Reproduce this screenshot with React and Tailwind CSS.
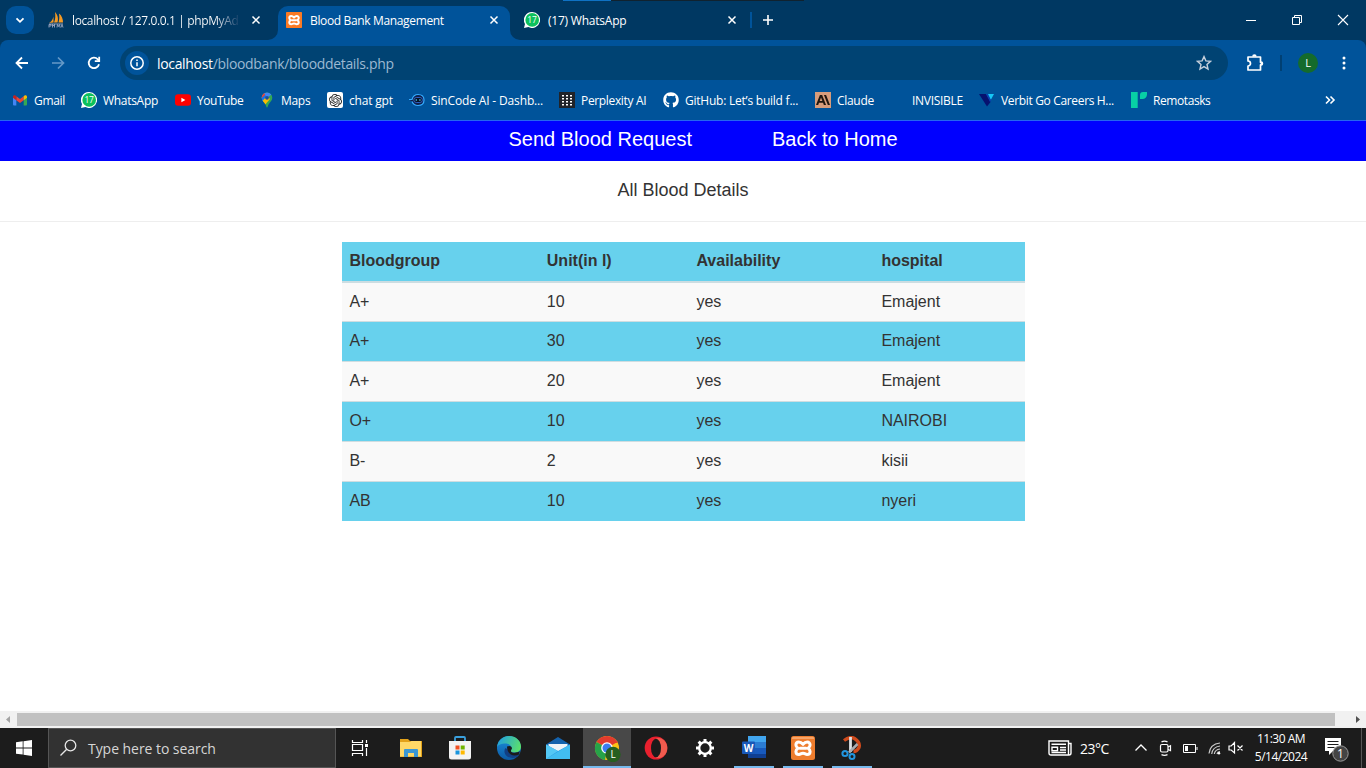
import React from "react";
import { SiAnthropic, SiOpenai } from "react-icons/si";
import { FaGithub } from "react-icons/fa";

const CloseIcon = () => (
  <svg className="size-4 shrink-0" viewBox="0 0 16 16" fill="none" stroke="#fff" strokeWidth="1.5">
    <path d="M4.5 4.5l7 7M11.5 4.5l-7 7" />
  </svg>
);

const Xampp = ({ big }) => (
  <svg className={big ? "size-6 shrink-0" : "size-4 shrink-0"} viewBox="0 0 24 24">
    <rect width="24" height="24" rx={big ? 2.5 : 1} fill={big ? "#ee7d2e" : "#fb7a24"} />
    {big && <path d="M1 2q0-1 1-1h20q1 0 1 1v1H1z" fill="#f6a468" />}
    <path
      d="M12 8.300C10.500 6.500 9.300 6 7.800 6 5.900 6 4.900 7.400 4.900 9c0 1.500.9 2.400 2.100 3.200-1.200.8-2.100 1.700-2.100 3.200 0 1.700 1.200 3 3.100 3 1.500 0 1.900-1.200 4-1.200s2.500 1.200 4 1.200c1.900 0 3.100-1.300 3.100-3 0-1.500-.9-2.400-2.100-3.200 1.200-.8 2.100-1.700 2.100-3.200 0-1.600-1-3-2.900-3-1.500 0-2.700.5-4.200 2.300z"
      fill="none"
      stroke="#fff"
      strokeWidth="3"
      strokeLinejoin="round"
    />
    <path d="M9 12.200h6" stroke="#fff" strokeWidth="3" strokeLinecap="round" />
  </svg>
);

const WhatsApp = () => (
  <svg className="size-4 shrink-0" viewBox="0 0 16 16">
    <path d="M8 0a8 8 0 1 1-3.600 15.100L0 16l1-4A8 8 0 0 1 8 0z" fill="#fff" />
    <circle cx="8.200" cy="7.900" r="6.800" fill="#0dc15c" />
    <text x="8.100" y="10.900" fontSize="8.500" fill="#fff" textAnchor="middle" fontFamily="Open Sans, sans-serif">17</text>
  </svg>
);

const PhpMyAdmin = () => (
  <svg className="size-4 shrink-0" viewBox="0 0 16 16">
    <path d="M5.500 1.500C6 5 4.500 9 1 11l4.500-.5zM7 0c3 3 3.500 7 2.500 10.500H6C7.500 7 7.500 4 7 0zM11 1.500c3 2 4 6 4 9h-4.500C11.500 7 11.500 5 11 1.500z" fill="#f59a23" />
    <path d="M1 12h14M1 15.500V12.500h2v1.500H1M4.500 12v3.500m0-2h2M6.500 12v3.500M9 15.500l.5-3 1 2 1-2 .5 3M13 15.500l1-3 1 3" stroke="#9ca6bf" strokeWidth=".9" fill="none" />
  </svg>
);

const Gmail = () => (
  <svg className="h-4 w-4 shrink-0" viewBox="0 0 16 16">
    <path d="M1 4.500l3.300 2.400V13.500H2A1 1 0 0 1 1 12.500z" fill="#4285f4" />
    <path d="M15 4.500l-3.300 2.400V13.500H14a1 1 0 0 0 1-1z" fill="#34a853" />
    <path d="M4.300 4.200L8 7l3.700-2.800v4L8 11 4.300 8.200z" fill="#ea4335" />
    <path d="M11.700 4.200l.6-.5c1.200-.9 2.700-.2 2.700 1.200v.8l-3.300 2.500z" fill="#fbbc04" />
    <path d="M4.300 4.200l-.6-.5C2.500 2.800 1 3.500 1 4.900v.8l3.300 2.500z" fill="#c5221f" />
  </svg>
);

const YouTube = () => (
  <svg className="size-4 shrink-0" viewBox="0 0 16 16">
    <rect y="2.300" width="16" height="11.400" rx="3" fill="#f00" />
    <path d="M6.400 5.700v4.600l4-2.300z" fill="#fff" />
  </svg>
);

const Maps = () => (
  <svg className="size-4 shrink-0" viewBox="0 0 16 16">
    <defs>
      <clipPath id="pin"><path d="M8 .5a5.300 5.300 0 0 1 5.300 5.300c0 3-2.300 4.200-3.800 6.700-.7 1.200-.8 3-1.500 3s-.8-1.800-1.500-3C5 10 2.700 8.800 2.700 5.800A5.300 5.300 0 0 1 8 .5z" /></clipPath>
    </defs>
    <g clipPath="url(#pin)">
      <rect width="16" height="16" fill="#34a853" />
      <path d="M0 0h16L8 5.800 3 11H0z" fill="#4285f4" />
      <path d="M2 5l3.500-3L8 5.800 3.500 10z" fill="#1a73e8" />
      <path d="M2.500 10L8 4l3 3-6 7z" fill="#fbbc04" />
      <path d="M0 0h5l1 3-4 3.500z" fill="#ea4335" />
    </g>
    <circle cx="8" cy="5.800" r="1.900" fill="#174ea6" />
  </svg>
);

const ChatGpt = () => (
  <span className="flex size-4 shrink-0 items-center justify-center rounded-[2px] bg-white">
    <SiOpenai size={13} color="#222" />
  </span>
);

const SinCode = () => (
  <svg className="size-4 shrink-0" viewBox="0 0 16 16">
    <path d="M0 7.500h3C4 4 6.500 2.500 9 2.500c4 0 6 2.500 6 5.500s-2 5.500-6 5.500c-2.500 0-5-1.500-6-4" fill="#10204a" stroke="#35aaff" strokeWidth="1.200" />
    <rect x="4.800" y="5.500" width="8.600" height="5" rx="2.500" fill="#061225" stroke="#3970e8" strokeWidth=".8" />
    <circle cx="7.300" cy="8" r=".8" fill="#55d8ff" /><circle cx="10.900" cy="8" r=".8" fill="#55d8ff" />
  </svg>
);

const Perplexity = () => (
  <svg className="size-4 shrink-0" viewBox="0 0 16 16">
    <rect width="16" height="16" fill="#202329" />
    <g fill="#fff">
      {[3, 6, 9, 12].map((y) => [3, 7, 11].map((x) => <rect key={x + "-" + y} x={x} y={y} width="2" height="1.500" />))}
    </g>
  </svg>
);

const Claude = () => (
  <span className="flex size-4 shrink-0 items-center justify-center bg-[#d79c7b]">
    <SiAnthropic size={14} color="#20160f" />
  </span>
);

const Verbit = () => (
  <svg className="size-4 shrink-0" viewBox="0 0 16 16">
    <path d="M0 2h7l4.500 8L8 14.500z" fill="#06116f" />
    <path d="M8 2h7l-3.300 6z" fill="#16c8f5" /><path d="M7 2h2l3 6-1 2z" fill="#0b3fae" />
  </svg>
);

const Remotasks = () => (
  <svg className="size-4 shrink-0" viewBox="0 0 16 16">
    <path d="M0 0h6.700v16H0zM9 7V3a3 3 0 0 1 3-3h4v2.500A4.500 4.500 0 0 1 11.500 7z" fill="#08cfa5" />
  </svg>
);

const bookmarks = [
  { label: "Gmail", icon: <Gmail />, cls: "w-[69px] tracking-[-0.300px]" },
  { label: "WhatsApp", icon: <WhatsApp />, cls: "w-[94px] tracking-[-0.300px]" },
  { label: "YouTube", icon: <YouTube />, cls: "w-[84px] tracking-[-0.450px]" },
  { label: "Maps", icon: <Maps />, cls: "w-[68px] tracking-[-0.300px]" },
  { label: "chat gpt", icon: <ChatGpt />, cls: "w-[82px] tracking-[-0.200px]" },
  { label: "SinCode AI - Dashb...", icon: <SinCode />, cls: "w-[150px] tracking-[-0.150px]" },
  { label: "Perplexity AI", icon: <Perplexity />, cls: "w-[104px] tracking-[-0.340px]" },
  { label: "GitHub: Let’s build f...", icon: <FaGithub size={16} className="shrink-0" />, cls: "w-[152px] tracking-[-0.230px]" },
  { label: "Claude", icon: <Claude />, cls: "w-[75px] tracking-[-0.300px]" },
  { label: "INVISIBLE", icon: <span className="size-4 shrink-0" />, cls: "w-[89px] tracking-[-0.300px]" },
  { label: "Verbit Go Careers H...", icon: <Verbit />, cls: "w-[152px] tracking-[-0.340px]" },
  { label: "Remotasks", icon: <Remotasks />, cls: "w-[100px] tracking-[-0.420px]" },
];

function TabStrip() {
  return (
    <div className="relative flex h-10 bg-[#003862] text-[12px]">
      <div className="absolute left-[563px] top-0 h-px w-12 bg-[#0f72c4]" />
      <div className="absolute left-[611px] top-0 h-px w-[193px] bg-[#10222f]" />
      <div className="ml-1.5 mt-1.5 flex size-7 items-center justify-center rounded-[10px] bg-[#00539a]">
        <svg className="size-4" viewBox="0 0 16 16" fill="none" stroke="#fff" strokeWidth="1.800"><path d="M4.500 6.300L8 9.800l3.500-3.500" /></svg>
      </div>
      <div className="ml-3.5 flex w-[230px] items-center">
        <PhpMyAdmin />
        <span className="ml-2 w-[168px] whitespace-nowrap bg-linear-to-r from-white from-85% to-[#003862] bg-clip-text pt-0.5 tracking-[-0.380px] text-transparent">localhost / 127.0.0.1 | phpMyAd</span>
        <span className="ml-2"><CloseIcon /></span>
      </div>
      <div className="relative mt-1.5 flex h-[34px] w-[232px] items-center rounded-t-[10px] bg-[#00539a] pb-1.5 pl-2">
        <svg className="absolute -left-2.5 bottom-0 size-2.5" viewBox="0 0 10 10"><path d="M10 0v10H0A10 10 0 0 0 10 0z" fill="#00539a" /></svg>
        <svg className="absolute -right-2.5 bottom-0 size-2.5" viewBox="0 0 10 10"><path d="M0 0v10h10A10 10 0 0 1 0 0z" fill="#00539a" /></svg>
        <Xampp />
        <span className="ml-2 w-[176px] whitespace-nowrap pt-0.5 tracking-[-0.350px]">Blood Bank Management</span>
        <CloseIcon />
      </div>
      <div className="ml-3.5 flex items-center">
        <WhatsApp />
        <span className="ml-2 w-[176px] whitespace-nowrap pt-0.5 tracking-[-0.220px]">(17) WhatsApp</span>
        <CloseIcon />
        <span className="ml-2.5 h-4 w-0.5 bg-[#00539a]" />
        <svg className="ml-2 size-4" viewBox="0 0 16 16" fill="none" stroke="#fff" strokeWidth="1.600"><path d="M8 3v10M3 8h10" /></svg>
      </div>
      <div className="ml-auto flex items-center gap-[34px] pr-[17px]">
        <svg className="size-3" viewBox="0 0 12 12" stroke="#fff"><path d="M1 6.500h10" /></svg>
        <svg className="size-3" viewBox="0 0 12 12" fill="none" stroke="#fff"><path d="M1.500 3.500h7v7h-7zM3.500 3.500v-2h7v7h-2" /></svg>
        <svg className="size-3" viewBox="0 0 12 12" stroke="#fff" strokeWidth="1.100"><path d="M1 1l10 10M11 1L1 11" /></svg>
      </div>
    </div>
  );
}

function Toolbar() {
  return (
    <div className="bg-[#003862]">
      <div className="flex h-[46px] items-center rounded-t-lg bg-[#00539a]">
        <svg className="ml-3.5 size-4" viewBox="0 0 16 16" fill="none" stroke="#fff" strokeWidth="1.800"><path d="M14 8H3M8 2.500L2.500 8 8 13.500" /></svg>
        <svg className="ml-5 size-4" viewBox="0 0 16 16" fill="none" stroke="#6599c7" strokeWidth="1.700"><path d="M2 8h11M8 2.500L13.500 8 8 13.500" /></svg>
        <svg className="ml-5 size-4" viewBox="0 0 16 16" fill="none" stroke="#fff" strokeWidth="1.800"><path d="M13 9.200A5.200 5.200 0 1 1 11.800 4.400L13 5.700" /><path d="M13.200 1.800v4.400H8.800" /></svg>
        <div className="ml-[18px] flex h-[34px] w-[1108px] items-center rounded-full bg-[#004373] pl-[5px] pr-4">
          <span className="flex size-6 items-center justify-center rounded-full bg-[#00539a]">
            <svg className="size-4" viewBox="0 0 16 16" fill="none" stroke="#fff" strokeWidth="1.500"><circle cx="8" cy="8" r="6.200" /><path d="M8 7.300v4M8 4.500v1.600" /></svg>
          </span>
          <span className="ml-2 whitespace-nowrap text-[14px] tracking-[-0.330px] text-[#9cb9d2]"><span className="text-white">localhost</span>/bloodbank/blooddetails.php</span>
          <svg className="ml-auto size-4" viewBox="0 0 16 16" fill="none" stroke="#c6d0dc" strokeWidth="1.400"><path d="M8 1.600l1.900 4.300 4.600.4-3.500 3.100 1 4.600L8 11.600 4 14l1-4.600-3.500-3.100 4.600-.4z" /></svg>
        </div>
        <svg className="ml-[18px] size-[18px]" viewBox="0 0 18 18" fill="none" stroke="#fff" strokeWidth="1.700" strokeLinejoin="round"><path d="M2 3h12.500v5.300a1.300 1.300 0 0 1 0 2.600V16H2v-4a2.500 2.500 0 0 0 0-5z" /><path d="M7 2.500a1.400 1.400 0 0 1 2.800 0M15 8.200a1.400 1.400 0 0 1 0 2.800" fill="#fff" /></svg>
        <span className="ml-4 h-4 w-0.5 bg-[#004073]" />
        <span className="ml-4 flex size-5 items-center justify-center rounded-full bg-[#146b2c] pt-px text-[11px]">L</span>
        <svg className="ml-[18px] size-4" viewBox="0 0 16 16" fill="#fff"><circle cx="8" cy="3" r="1.500" /><circle cx="8" cy="8" r="1.500" /><circle cx="8" cy="13" r="1.500" /></svg>
      </div>
    </div>
  );
}

function Bookmarks() {
  return (
    <div className="flex h-[35px] items-center border-b border-[#2565f0] bg-[#00539a] pb-1.5 pl-3 pr-7 text-[12px]">
      {bookmarks.map((b) => (
        <div key={b.label} className={"flex shrink-0 items-center gap-1.5 whitespace-nowrap " + b.cls}>
          {b.icon}
          <span className="pt-px">{b.label}</span>
        </div>
      ))}
      <svg className="ml-auto size-4" viewBox="0 0 16 16" fill="none" stroke="#fff" strokeWidth="1.600"><path d="M4 4.500L7.500 8 4 11.500M8.500 4.500L12 8l-3.500 3.500" /></svg>
    </div>
  );
}

const rows = [
  ["A+", "10", "yes", "Emajent"],
  ["A+", "30", "yes", "Emajent"],
  ["A+", "20", "yes", "Emajent"],
  ["O+", "10", "yes", "NAIROBI"],
  ["B-", "2", "yes", "kisii"],
  ["AB", "10", "yes", "nyeri"],
];

function Page() {
  return (
    <main className="flex h-[607px] flex-col bg-white font-['Liberation_Sans',Arial,sans-serif] text-[#333]">
      <nav className="flex h-10 shrink-0 gap-20 bg-[#0000ff] pl-[508.500px] pt-1 text-[20px] leading-[28px] text-white">
        <a>Send Blood Request</a>
        <a>Back to Home</a>
      </nav>
      <h1 className="h-[61px] shrink-0 border-b border-[#eee] pt-[19px] text-center text-[18px] leading-5">All Blood Details</h1>
      <table className="ml-[342px] mt-5 w-[683px] table-fixed border-separate border-spacing-0 text-left text-[16px] leading-[22px]">
        <colgroup>
          <col className="w-[197px]" />
          <col className="w-[150px]" />
          <col className="w-[185px]" />
          <col className="w-[151px]" />
        </colgroup>
        <thead>
          <tr className="h-[41px] bg-[#67d1ed]">
            {["Bloodgroup", "Unit(in l)", "Availability", "hospital"].map((h) => (
              <th key={h} className="border-b-2 border-[#ccdde2] px-[7.400px] pb-0.5 pt-0 font-bold nth-2:pl-[7.800px]">{h}</th>
            ))}
          </tr>
        </thead>
        <tbody>
          {rows.map((r, i) => (
            <tr key={i} className="h-10 odd:bg-[#f9f9f9] even:bg-[#67d1ed] first:h-[39px] last:h-[39px]">
              {r.map((c, j) => (
                <td key={j} className={"px-[7.400px] pt-0 nth-2:pl-[7.800px] " + (i === 0 ? "border-b border-[#cfdde1] pb-0" : i < 5 ? "border-b border-[#cfdde1] pb-0.5" : "pb-0.5")}>{c}</td>
              ))}
            </tr>
          ))}
        </tbody>
      </table>
      <div className="mt-auto flex h-[17px] shrink-0 items-center bg-[#f1f1f1]">
        <svg className="h-[17px] w-[17px]" viewBox="0 0 17 17"><path d="M10 5v7L6 8.500z" fill="#a3a3a3" /></svg>
        <div className="h-[13px] w-[1318px] bg-[#c1c1c1]" />
        <svg className="ml-auto h-[17px] w-[17px]" viewBox="0 0 17 17"><path d="M7 5v7l4-3.500z" fill="#505050" /></svg>
      </div>
    </main>
  );
}

const Explorer = () => (
  <svg className="size-6" viewBox="0 0 24 24">
    <path d="M1 3h8l2 2h12v16H1z" fill="#e3a21a" /><path d="M1 6h10l1.500-1H22v15.500H1z" fill="#ffd867" />
    <path d="M5 21v-7q0-1 1-1h12q1 0 1 1v7h-4v-4H9v4z" fill="#3b97d3" />
  </svg>
);
const Store = () => (
  <svg className="size-6" viewBox="0 0 24 24">
    <path d="M7 6V2q0-1 1-1h8q1 0 1 1v4" fill="none" stroke="#3aa0dd" strokeWidth="1.800" />
    <path d="M1 5h22v16q0 2.500-2.500 2.500h-17Q1 23.500 1 21z" fill="#f3f3f3" />
    <path d="M7.500 9.500h4v4h-4z" fill="#f25022" /><path d="M12.700 9.500h4v4h-4z" fill="#6fb400" /><path d="M7.500 14.500h4v4h-4z" fill="#1895dd" /><path d="M12.700 14.500h4v4h-4z" fill="#ffb900" />
  </svg>
);
const Edge = () => (
  <svg className="size-6" viewBox="0 0 24 24">
    <defs>
      <linearGradient id="edgeTop" x1="0" x2="1" y1=".3" y2=".6"><stop stopColor="#219fe0" /><stop offset="1" stopColor="#5be06b" /></linearGradient>
      <linearGradient id="edgeSide" x1="0" x2="0" y1="0" y2="1"><stop stopColor="#1c91dd" /><stop offset="1" stopColor="#0c59a4" /></linearGradient>
    </defs>
    <circle cx="12" cy="12" r="12" fill="url(#edgeSide)" />
    <path d="M0 11C1 4 6 0 12 0c7 0 12 5 12 10.500 0 4-3 6-6.500 6-3 0-4.500-1-3.500-2.500 2-3-1-6.500-5.500-6.500C4.500 7.500 1 9 0 11z" fill="url(#edgeTop)" />
    <path d="M8.500 12c-3 4 .5 10 7 10 3 0 5.500-1.500 7-4-2 1-9 2-9-3.500-1-.5-3.500-1-5-2.500z" fill="#123f83" />
    <path d="M10 10.500q4-1.500 5 1.500c0 1.500-1.500 2.200-1 3.400.7 1.400 5 2 8.800-.2l-.8 3.300c-6 2.800-12-.5-12-8z" fill="#1b1b1b" />
  </svg>
);
const Mail = () => (
  <svg className="size-6" viewBox="0 0 24 24">
    <path d="M0 8.500L12 1l12 7.500L12 17z" fill="#1463ae" /><path d="M2.500 8h19v7h-19z" fill="#eef4f8" />
    <path d="M0 8.500L12 15l12-6.500V23H0z" fill="#2b9de5" /><path d="M0 23l24-14.500V23z" fill="#42bdf1" /><path d="M0 8.500L12 15 0 23z" fill="#54c8f5" />
  </svg>
);
const Chrome = () => (
  <svg className="h-7 w-7" viewBox="0 0 28 28">
    <circle cx="14" cy="14" r="12" fill="#fbc116" />
    <path d="M14 14L3.600 8A12 12 0 0 1 24.400 8z" fill="#e33b2e" /><path d="M14 14l-2 12A12 12 0 0 1 3.600 8z" fill="#26a349" />
    <path d="M14 8.300h10.600" stroke="#e33b2e" strokeWidth="1" />
    <circle cx="14" cy="14" r="5.800" fill="#fff" /><circle cx="14" cy="14" r="4.500" fill="#3c7df0" />
    <circle cx="20" cy="20.500" r="7.700" fill="#275f20" />
    <text x="20" y="24" textAnchor="middle" fontSize="10" fill="#fff" fontFamily="Open Sans, sans-serif">L</text>
  </svg>
);
const Opera = () => (
  <svg className="size-6" viewBox="0 0 24 24">
    <ellipse cx="12" cy="12" rx="11.300" ry="11.500" fill="#e9202e" />
    <path d="M12 2.500c3-2 11.300 1 11.300 9.500S15 23.500 12 21.500z" fill="#f15b4e" />
    <ellipse cx="12" cy="12" rx="5" ry="9.300" fill="#1b1b1b" />
  </svg>
);
const Gear = () => (
  <svg className="size-6" viewBox="0 0 24 24" fill="none" stroke="#fff">
    <circle cx="12" cy="12" r="5.800" strokeWidth="2.300" />
    {[0, 45, 90, 135, 180, 225, 270, 315].map((a) => <path key={a} d="M12 3v3.500" strokeWidth="3" transform={`rotate(${a} 12 12)`} />)}
  </svg>
);
const Word = () => (
  <svg className="size-6" viewBox="0 0 24 24">
    <path d="M6 0h18v6H6z" fill="#41a5ee" /><path d="M6 6h18v6H6z" fill="#2b7cd3" /><path d="M6 12h18v6H6z" fill="#185abd" /><path d="M6 18h18v4H6z" fill="#103f91" />
    <rect y="5.500" width="13" height="12.500" rx="1" fill="#1858b8" />
    <text x="6.500" y="15.500" textAnchor="middle" fontSize="10" fontWeight="700" fill="#fff" fontFamily="Open Sans, sans-serif">W</text>
  </svg>
);
const Snip = () => (
  <svg className="size-6" viewBox="0 0 24 24" fill="none">
    <path d="M4 4.500Q10 0 14.500 2.500 20.500 6.500 19 11.500 17 15.500 13.500 15.500" stroke="#cf4a1c" strokeWidth="3.400" />
    <path d="M10.500 1v15" stroke="#dfe2e5" strokeWidth="2.800" /><path d="M17.500 8L9 16.500" stroke="#a9adb2" strokeWidth="2.500" />
    <circle cx="5" cy="17.500" r="2.600" stroke="#2296df" strokeWidth="2" /><circle cx="12" cy="20.500" r="2.500" stroke="#2296df" strokeWidth="2" />
  </svg>
);
const apps = [
  { icon: <Explorer /> }, { icon: <Store /> }, { icon: <Edge /> }, { icon: <Mail /> }, { icon: <Chrome />, active: true },
  { icon: <Opera /> }, { icon: <Gear /> }, { icon: <Word />, open: true }, { icon: <Xampp big />, open: true }, { icon: <Snip />, open: true },
];

function Taskbar() {
  return (
    <footer className="flex h-10 items-center bg-[#1c1c1c]">
      <div className="flex w-12 justify-center">
        <svg className="size-4" viewBox="0 0 16 16" fill="#fff"><path d="M0 2.200l6.700-.9v6.200H0zM7.500 1.200L16 0v7.500H7.500zM0 8.400h6.700v6.200L0 13.700zM7.500 8.400H16V16l-8.500-1.200z" /></svg>
      </div>
      <div className="flex h-10 w-72 items-center border border-[#555] bg-[#323232] pl-2.5 text-[#d6d6d6]">
        <svg className="size-[18px]" viewBox="0 0 18 18" fill="none" stroke="#e6e6e6" strokeWidth="1.300"><circle cx="11.500" cy="6.500" r="5.300" /><path d="M7.700 10.300L1.500 16.500" /></svg>
        <span className="ml-[11px] whitespace-nowrap text-[14px] tracking-[-0.050px]">Type here to search</span>
      </div>
      <div className="flex w-12 justify-center">
        <svg className="size-[18px]" viewBox="0 0 18 18" fill="none" stroke="#fff" strokeWidth="1.200"><path d="M1.500 1v2.500h10V1M1.500 17v-2.500h10V17M1.500 5.500h10v6h-10zM15.500 1v3M15.500 9v8" /><path d="M14 5h3v3h-3z" fill="#fff" stroke="none" /></svg>
      </div>
      <div className="ml-[3px] flex gap-px">
        {apps.map((a, i) => (
          <div key={i} className={"flex h-10 w-12 flex-col items-center " + (a.active ? "bg-[#484848]" : "")}>
            <div className="flex h-[38px] items-center pt-0.5">{a.icon}</div>
            <div className={a.active ? "h-0.5 w-12 bg-[#76b9ed]" : a.open ? "h-0.5 w-10 bg-[#76b9ed]" : "h-0.5"} />
          </div>
        ))}
      </div>
      <div className="ml-auto flex items-center text-white">
        <svg className="h-4 w-6" viewBox="0 0 24 16" fill="none" stroke="#fff" strokeWidth="1.400"><path d="M1 1h19.500v14H3q-2 0-2-2zM20.500 3.500H23V13q0 2-2 2h-2M3.500 4.200H18M12 7.500h6M12 10h6M3.500 12.500H18" /><path d="M4 7.300h5.500v3.500H4z" /></svg>
        <span className="ml-2 w-[54px] text-[14px] tracking-[-0.500px]">23°C</span>
        <svg className="h-4 w-3.5" viewBox="0 0 14 16" fill="none" stroke="#fff" strokeWidth="1.300"><path d="M1.500 10.500L7 5l5.500 5.500" /></svg>
        <svg className="ml-[11px] h-4 w-3.5" viewBox="0 0 14 16" fill="none" stroke="#fff" strokeWidth="1.200"><rect x="1.500" y="4.500" width="7.500" height="7.500" rx="1.500" /><path d="M9 7l2.500-1.200v4.800L9 9.500M2.500 1.900q3-1.500 6 0M2.500 14.600q3 1.500 6 0" /></svg>
        <svg className="ml-[9px] h-4 w-4" viewBox="0 0 16 16"><path d="M1.500 4.500h12v8h-12zM15 7v3" fill="none" stroke="#fff" /><path d="M3 6h3v5H3z" fill="#fff" /></svg>
        <svg className="ml-[9px] h-4 w-4" viewBox="0 0 16 16" fill="none" stroke="#ccc" strokeWidth="1.200"><path d="M2 13.500Q3 4 13 3M4.700 14Q5.500 7 13 6M7.300 14Q8 9.500 13 9M10 14q.5-2 3-2.300" /><circle cx="12" cy="13.300" r="1.200" fill="#fff" stroke="none" /></svg>
        <svg className="ml-[5px] h-4 w-4" viewBox="0 0 16 16" fill="none" stroke="#fff" strokeWidth="1.200"><path d="M1 6h2.200L6.500 2.500v10.500L3.200 10H1zM9.500 5.500l5 5M14.500 5.500l-5 5" /></svg>
        <div className="ml-1.5 flex w-[62px] flex-col items-center whitespace-nowrap text-[12px] leading-[18px] tracking-[-0.500px]">
          <span>11:30 AM</span>
          <span>5/14/2024</span>
        </div>
        <svg className="ml-3 mt-1 h-[26px] w-[26px]" viewBox="0 0 26 26">
          <path d="M1 1h16v13H9l-4 4v-4H1z" fill="#fff" /><path d="M3.500 4.500h11M3.500 7.500h11M3.500 10.500h7" stroke="#1c1c1c" />
          <circle cx="16.500" cy="16.500" r="7.700" fill="#444" stroke="#999" /><text x="16.500" y="20.500" textAnchor="middle" fontSize="12" fill="#fff" fontFamily="Open Sans, sans-serif">1</text>
        </svg>
        <span className="ml-[11px] mr-1 h-10 w-px bg-[#555]" />
      </div>
    </footer>
  );
}

export default function App() {
  return (
    <div className="h-[768px] w-[1366px] overflow-hidden font-['Open_Sans',sans-serif] text-white">
      <TabStrip />
      <Toolbar />
      <Bookmarks />
      <Page />
      <Taskbar />
    </div>
  );
}
